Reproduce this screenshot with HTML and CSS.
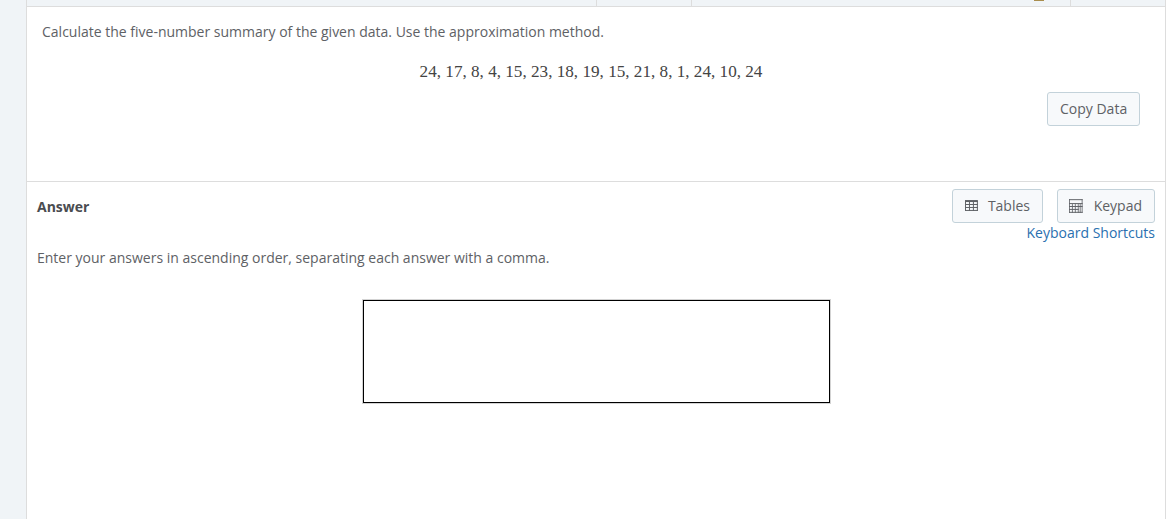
FILE: index.html
```
<!DOCTYPE html>
<html lang="en">
<head>
  <meta charset="UTF-8" />
  <meta name="viewport" content="width=device-width, initial-scale=1.0"/>
  <title>Five-Number Summary</title>
  <link rel="stylesheet" href="styles.css">
</head>
<body>
  <main class="panel">
    <div class="tabs">
      <div class="tab tab-title"></div>
      <div class="tab tab-small"></div>
      <div class="tab tab-score"><span class="coin"></span></div>
    </div>

    <section class="question">
      <p class="prompt">Calculate the five-number summary of the given data. Use the approximation method.</p>
      <p class="data">24, 17, 8, 4, 15, 23, 18, 19, 15, 21, 8, 1, 24, 10, 24</p>
      <button class="btn btn-copy">Copy Data</button>
    </section>

    <section class="answer">
      <div class="answer-header">
        <h2>Answer</h2>
        <div class="tools">
          <div class="tool-buttons">
            <button class="btn btn-tables">
              <svg width="13" height="11" viewBox="0 0 13 11" fill="none" stroke="#5e6165">
                <path d="M.5 1v10M4.5 1v10M8.5 1v10M12.5 1v10M0 4.5h13M0 7.5h13M0 10.5h13" />
                <path d="M0 1h13" stroke-width="2" />
              </svg>
              Tables
            </button>
            <button class="btn btn-keypad">
              <svg width="14" height="14" viewBox="0 0 14 14" fill="none" stroke="#5e6165">
                <path d="M0 .5h14M0 4.5h14M0 7.5h14M0 10.5h10M0 13.5h14" />
                <path d="M.5 0v14M13.5 0v14M3.5 5v9M6.5 5v9M9.5 5v9M11.5 5v9" stroke-opacity=".85" />
              </svg>
              Keypad
            </button>
          </div>
          <a class="shortcuts" href="#">Keyboard Shortcuts</a>
        </div>
      </div>
      <p class="hint">Enter your answers in ascending order, separating each answer with a comma.</p>
      <div class="answer-box"></div>
    </section>
  </main>
</body>
</html>
```
FILE: styles.css
```
* {
  box-sizing: border-box;
}

body {
  margin: 0;
  height: 100vh;
  padding: 0 1px 0 26px;
  overflow: hidden;
  background: linear-gradient(to right, #f0f4f7 26px, #ffffff 26px);
  font-family: 'Open Sans', sans-serif;
  font-size: 14px;
  line-height: 20px;
  color: #5e6165;
}

p,
h2 {
  margin: 0;
}

.panel {
  height: 100%;
  background: #ffffff;
  border-left: 1px solid #dddddd;
  border-right: 1px solid #dddddd;
}

.tabs {
  display: flex;
  height: 7px;
  background: #f0f4f7;
  border-bottom: 1px solid #dddddd;
}

.tab {
  border-right: 1px solid #dddddd;
}

.tab-title {
  width: 570px;
}

.tab-small {
  width: 95px;
}

.tab-score {
  display: flex;
  justify-content: flex-end;
  width: 379px;
  padding-right: 26px;
}

.coin {
  width: 10px;
  height: 1px;
  background: #a98d4d;
}

.question {
  display: flex;
  flex-direction: column;
  height: 175px;
  padding: 15px 25px 0 15px;
  border-bottom: 1px solid #dddddd;
}

.data {
  margin-top: 20px;
  font-family: 'Liberation Serif', serif;
  font-size: 17.15px;
  text-align: center;
  color: #444444;
}

.btn {
  display: flex;
  align-items: center;
  height: 34px;
  padding: 0 12px 2px;
  border: 1px solid #c3d2da;
  border-radius: 3px;
  background: #f7f9fb;
  font-family: inherit;
  font-size: 14px;
  color: #5e6165;
  white-space: nowrap;
  cursor: pointer;
}

.btn-copy {
  align-self: flex-end;
  width: 93px;
  margin-top: 10px;
}

.btn-tables {
  width: 91px;
  gap: 10px;
}

.btn-tables svg {
  margin-top: 1px;
}

.btn-keypad {
  width: 98px;
  gap: 11px;
  padding-left: 11px;
}

.btn-keypad svg {
  margin-top: 2px;
}

.answer {
  padding: 7px 10px 0;
}

.answer-header {
  display: flex;
  justify-content: space-between;
  align-items: flex-start;
}

h2 {
  margin-top: 8px;
  font-size: 14px;
  font-weight: 700;
  line-height: 20px;
  color: #4a4c50;
}

.tools {
  display: flex;
  flex-direction: column;
  align-items: flex-end;
}

.tool-buttons {
  display: flex;
  gap: 14px;
}

.shortcuts {
  color: #2a70b0;
  text-decoration: none;
}

.hint {
  margin-top: 5px;
}

.answer-box {
  width: 467px;
  height: 103px;
  margin: 32px auto 0 326px;
  border: 1px solid #000000;
  box-shadow: 0 0 0 1px #d3d3d3;
}
```
